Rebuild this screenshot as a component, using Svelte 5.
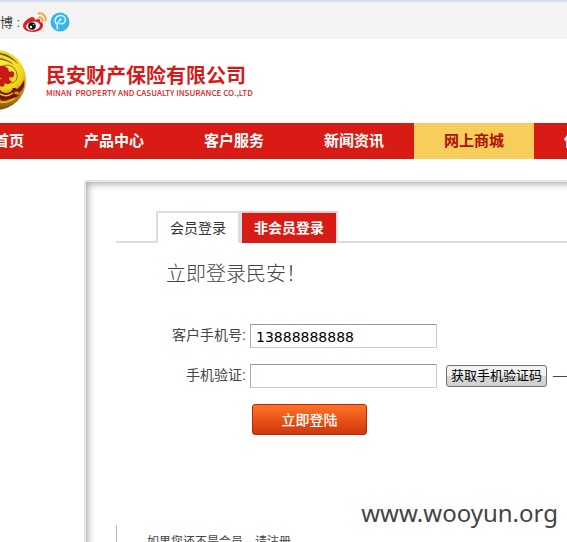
<script>
  const navItems = [
    { label: '首页', edge: 'first' },
    { label: '产品中心' },
    { label: '客户服务' },
    { label: '新闻资讯' },
    { label: '网上商城', active: true },
    { label: '保', edge: 'last' }
  ];
  let phone = $state('13888888888');
  let code = $state('');
</script>

<div class="page">
  <div class="topbar">
    <span>博 :</span>
    <a href="#weibo" aria-label="新浪微博">
      <svg width="24" height="20" viewBox="0 0 24 20">
        <path d="M9 5C5 6 0 10 0 14c0 3 4 6 10 6s10-3 10-7c0-2-1-3-3-3 1-3-1-4-5-2 0-2-1-3-3-3z" fill="#df1f26" />
        <ellipse cx="10" cy="14" rx="7" ry="4.300" fill="#fff" transform="rotate(-8 10 14)" />
        <circle cx="9" cy="14" r="3.8" fill="#111" />
        <circle cx="8" cy="15" r="1.2" fill="#fff" />
        <circle cx="10.6" cy="12.6" r=".7" fill="#fff" />
        <path d="M16 5.4c2-.5 4 1.200 3.400 3.600M15.500 1.500c4-1 8 2.500 7 7" fill="none" stroke="#f5a24b" stroke-width="2" stroke-linecap="round" />
      </svg>
    </a>
    <a href="#tweibo" aria-label="腾讯微博">
      <svg width="20" height="20" viewBox="0 0 20 20">
        <circle cx="10" cy="10" r="9.500" fill="#35b6e8" />
        <path d="M7.500 17c-.8-4 .2-7 2.500-9M6.500 12C3.500 8 6 3.500 10.500 3.500c3.500 0 5.500 2.600 4.800 5.200-.8 2.800-3.300 3.600-5.500 2.800" fill="none" stroke="#d9f4ff" stroke-width="1.500" stroke-linecap="round" />
        <circle cx="10.600" cy="7.400" r="1.200" fill="#d9f4ff" />
      </svg>
    </a>
  </div>

  <header>
    <svg class="emblem" width="27" height="62" viewBox="0 0 27 62">
      <defs>
        <radialGradient id="gold" gradientUnits="userSpaceOnUse" cx="4" cy="20" r="42">
          <stop offset="0" stop-color="#fff04a" />
          <stop offset=".45" stop-color="#f0d51d" />
          <stop offset=".7" stop-color="#c08a18" />
          <stop offset="1" stop-color="#75430f" />
        </radialGradient>
      </defs>
      <circle cx="-4" cy="31" r="30" fill="url(#gold)" />
      <path d="M0 4c8 1 14 5 18 11C12 10 7 7 0 5.500zM0 9c6 1 10 3 14 7C9 13 5 11 0 10.500z" fill="#6f5a0c" />
      <path d="M0 17c5-1 9 2 9 6 3-2 6 0 5 3 0 3-3 3-4 2-2 2 0 4 2 4-2 4-6 4-8 1-1-2-2-4-4-4z" fill="#c81818" />
      <path d="M3 17c7-3 13 2 14 8 1 5-2 9-6 9" fill="none" stroke="#a06a10" stroke-width="1" />
      <path d="M0 30c4-1 6 4 4 7-1 1-3 1-4 0z" fill="#c81818" />
      <path d="M0 41c3 4 10 4 12 0 0-3 4-2 5-1 3-2 5-5 7-9 1 6-1 10-5 13-1-2-4-2-5 0 2 2 4 2 6 1-4 5-9 4-13 6-3 1-5 1-7-1z" fill="#7c120c" />
      <path d="M0 45c5 3 9 2 13-1M0 53c5 1 11-1 15-4" fill="none" stroke="#ecc522" stroke-width="1.500" />
    </svg>
    <div class="brand">
      <strong>民安财产保险有限公司</strong>
      <span>MINAN&nbsp; PROPERTY AND CASUALTY INSURANCE CO.,LTD</span>
    </div>
  </header>

  <nav>
    {#each navItems as item}
      <a href="#nav" class={item.edge} class:active={item.active}>{item.label}</a>
    {/each}
  </nav>

  <main>
    <div class="tabs">
      <button type="button">会员登录</button>
      <button type="button" class="selected">非会员登录</button>
    </div>
    <h1>立即登录民安！</h1>
    <form onsubmit={(e) => e.preventDefault()}>
      <div class="row">
        <label for="phone">客户手机号:</label>
        <input id="phone" type="text" bind:value={phone} />
      </div>
      <div class="row">
        <label for="code">手机验证:</label>
        <input id="code" type="text" bind:value={code} />
        <button type="button" class="get">获取手机验证码</button>
        <span class="dash">—</span>
      </div>
      <button type="submit" class="submit">立即登陆</button>
    </form>
    <div class="hint">如果您还不是会员，请注册</div>
  </main>
  <div class="mark">www.wooyun.org</div>
</div>

<style>
  :global(body) {
    margin: 0;
    background: #fff;
  }
  .page {
    position: relative;
    height: 100vh;
    overflow: hidden;
    font-family: "Liberation Sans", "Noto Sans CJK SC", sans-serif;
    font-size: 14px;
    color: #444;
  }
  .page * {
    box-sizing: border-box;
  }
  button {
    margin: 0;
    font-family: inherit;
    white-space: nowrap;
  }
  .topbar {
    display: flex;
    align-items: center;
    gap: 3px;
    height: 39px;
    padding-top: 2px;
    border-top: 2px solid #d3e0ee;
    background: #f4f4f4;
    font-size: 13px;
  }
  .topbar a {
    display: flex;
  }
  header {
    display: flex;
    gap: 19px;
    height: 84px;
    padding-top: 10px;
  }
  .brand {
    display: flex;
    flex-direction: column;
    padding-top: 15px;
    color: #d71a18;
    white-space: nowrap;
  }
  .brand strong {
    font-size: 20px;
    line-height: 24px;
  }
  .brand span {
    font-family: "Noto Sans CJK SC", sans-serif;
    font-size: 8px;
    font-weight: 500;
    line-height: 10px;
  }
  nav {
    display: flex;
    height: 36px;
    overflow: hidden;
    background: #d91b15;
  }
  nav a {
    flex: 0 0 120px;
    color: #fff;
    font-size: 15px;
    font-weight: bold;
    line-height: 36px;
    text-align: center;
    text-decoration: none;
  }
  nav .first {
    margin-left: -66px;
    padding-right: 30px;
    text-align: right;
  }
  nav .last {
    padding-left: 30px;
    text-align: left;
  }
  nav .active {
    background: #f7cd5c;
    color: #b01000;
  }
  main {
    height: 400px;
    margin: 21px 0 0 84px;
    padding: 29px 0 0 30px;
    border: solid #e6e6e6;
    border-width: 2px 0 0 2px;
    box-shadow: inset 5px 5px 7px -3px #aaa;
  }
  .tabs {
    display: flex;
    height: 32px;
    padding-left: 40px;
    border-bottom: 2px solid #ddd;
  }
  .tabs button {
    height: 32px;
    padding: 0 12px;
    border: 2px solid #ddd;
    border-bottom: 0;
    background: #fff;
    color: #333;
    font-size: 14px;
    line-height: 30px;
  }
  .tabs .selected {
    border-color: #f0c8c4 #ddd;
    background: #d91b15;
    color: #fff;
    font-weight: bold;
  }
  h1 {
    margin: 14px 0 0 50px;
    color: #444;
    font-size: 20px;
    font-weight: 300;
    line-height: 34px;
  }
  form {
    padding-top: 33px;
  }
  .row {
    display: flex;
    align-items: center;
    height: 24px;
    margin-bottom: 16px;
    white-space: nowrap;
  }
  label,
  .dash {
    height: 24px;
    line-height: 22px;
  }
  label {
    width: 130px;
    text-align: right;
  }
  input {
    width: 187px;
    height: 24px;
    margin: 0 9px 0 4px;
    padding: 2px 5px 0;
    border: 1px solid #ccc;
    border-top-color: #999;
    border-left-color: #aaa;
    background: #fff;
    color: #000;
    font: 14px "DejaVu Sans", sans-serif;
  }
  .get {
    height: 22px;
    padding: 0 4px;
    border: 1px solid #707070;
    border-radius: 3px;
    background: linear-gradient(#f2f2f2 50%, #d8d8d8 50%, #d0d0d0);
    color: #000;
    font-size: 13px;
    line-height: 20px;
  }
  .dash {
    margin-left: 6px;
  }
  .submit {
    display: block;
    width: 115px;
    height: 31px;
    margin-left: 136px;
    padding: 0;
    border: 1px solid #b52a0c;
    border-radius: 3px;
    background: linear-gradient(#ff7228, #d0370b);
    color: #fff;
    font-size: 14px;
    font-weight: 500;
    line-height: 28px;
  }
  .hint {
    height: 60px;
    margin-top: 90px;
    padding: 7px 0 0 30px;
    border-left: 1px solid #bbb;
    font-size: 12px;
    line-height: 20px;
  }
  .mark {
    position: absolute;
    right: 9px;
    bottom: 11px;
    color: #444;
    font-family: "Noto Sans", "Open Sans", sans-serif;
    font-size: 24px;
    line-height: 36px;
  }
</style>
